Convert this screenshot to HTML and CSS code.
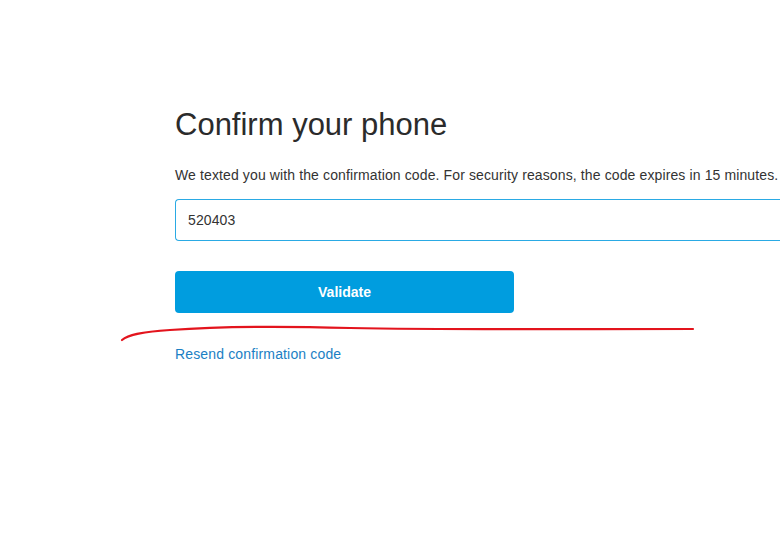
FILE: index.html
```html
<!DOCTYPE html>
<html lang="en">
<head>
  <meta charset="UTF-8">
  <meta name="viewport" content="width=device-width, initial-scale=1.0">
  <title>Confirm your phone</title>
  <link rel="stylesheet" href="styles.css">
</head>
<body>
<div class="page">
  <div class="container">
    <h1>Confirm your phone</h1>
    <p class="hint">We texted you with the confirmation code. For security reasons, the code expires in 15 minutes.</p>
    <input type="text" class="code-input" value="520403">
    <button class="button">Validate</button>
    <a href="#" class="resend">Resend confirmation code</a>
  </div>

  <!-- trazo rojo dibujado a mano -->
  <svg class="scribble" width="780" height="558" viewBox="0 0 780 558">
    <path d="M122 340 C 128 335, 140 332, 170 330 C 210 327, 280 326, 350 328 C 450 330, 560 329, 693 329" fill="none" stroke="#e3141d" stroke-width="2.2" stroke-linecap="round"/>
  </svg>
</div>
</body>
</html>
```

FILE: styles.css
```css
html, body {
  margin: 0;
  overflow: hidden;
  background: #fff;
}

body {
  font-family: "Liberation Sans", Arial, sans-serif;
  color: #333;
}

.page {
  position: relative;
  width: 780px;
  height: 558px;
}

.container {
  display: flex;
  flex-direction: column;
  align-items: flex-start;
  padding-top: 108px;
  padding-left: 175px;
}

h1 {
  font-size: 31px;
  font-weight: normal;
  line-height: 34px;
  margin: 0 0 24px 0;
  color: #2b2b2b;
}

.hint {
  font-size: 14px;
  line-height: 18px;
  letter-spacing: 0.12px;
  margin: 0 0 15px 0;
}

/* el campo sigue más allá del borde derecho */
.code-input {
  box-sizing: border-box;
  width: 605px;
  height: 42px;
  border: 1px solid #2aaae4;
  border-right: none;
  border-radius: 4px 0 0 4px;
  padding: 0 12px;
  font-family: "Liberation Sans", Arial, sans-serif;
  font-size: 14px;
  letter-spacing: 0.1px;
  color: #333;
  outline: none;
}

.button {
  margin-top: 30px;
  width: 339px;
  height: 42px;
  background-color: #009ddf;
  color: #fff;
  border: none;
  border-radius: 4px;
  font-family: "Liberation Sans", Arial, sans-serif;
  font-size: 14px;
  font-weight: bold;
}

.resend {
  margin-top: 32px;
  font-size: 14px;
  line-height: 18px;
  letter-spacing: 0.15px;
  color: #1b80c4;
  text-decoration: none;
}

.scribble {
  position: absolute;
  left: 0;
  top: 0;
  pointer-events: none;
}
```
